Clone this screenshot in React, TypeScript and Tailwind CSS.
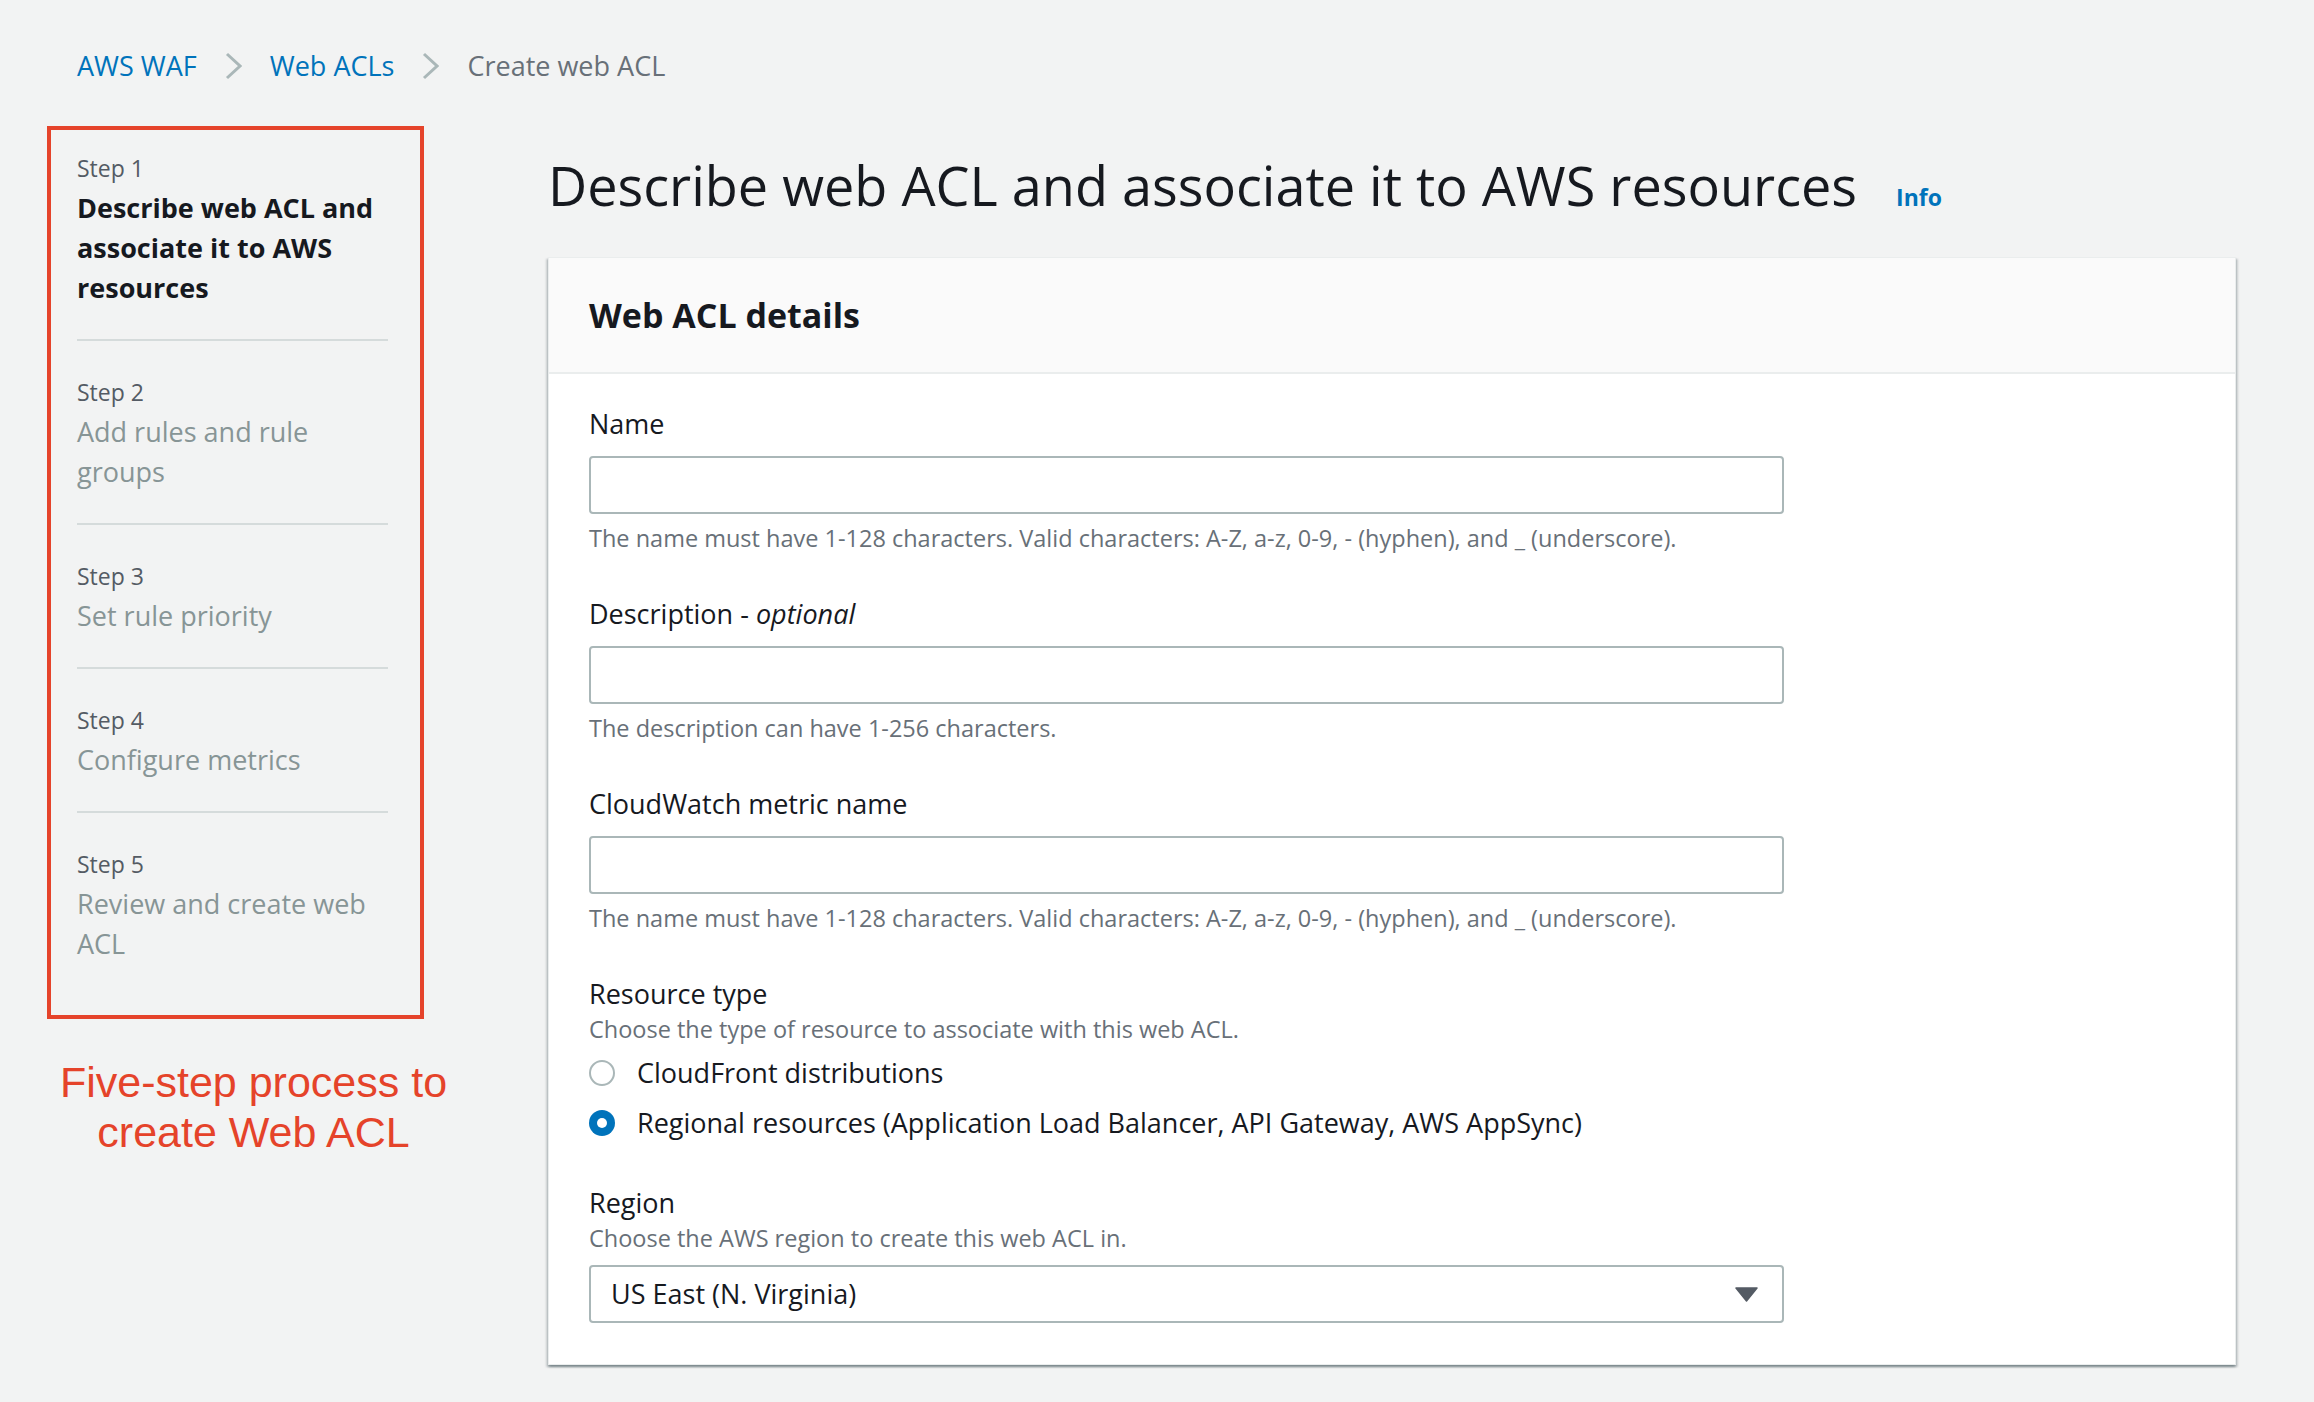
const steps = [
  { label: "Step 1", lines: ["Describe web ACL and", "associate it to AWS", "resources"], active: true },
  { label: "Step 2", lines: ["Add rules and rule", "groups"], active: false },
  { label: "Step 3", lines: ["Set rule priority"], active: false },
  { label: "Step 4", lines: ["Configure metrics"], active: false },
  { label: "Step 5", lines: ["Review and create web", "ACL"], active: false },
];

const Crumb = () => (
  <svg width="17" height="28" viewBox="0 0 17 28" fill="none" className="shrink-0">
    <path d="M2 2 L15 14 L2 26" stroke="#aab7b8" strokeWidth="3" />
  </svg>
);

const Field = ({ label, hint, first }: { label: React.ReactNode; hint: string; first?: boolean }) => (
  <div className={first ? "" : "mt-[39px]"}>
    <div className="text-[27px] leading-[40px] text-[#16191f] mb-[12px]">{label}</div>
    <div className="h-[58px] w-[1195px] border-2 border-[#aab7b8] rounded-[4px] bg-white" />
    <div className="mt-[7px] text-[23.5px] leading-[34px] text-[#687078]">{hint}</div>
  </div>
);

export default function App() {
  return (
    <div className="min-h-[1402px] w-full bg-[#f2f3f3] font-['Open_Sans',sans-serif] text-[#16191f]">
      {/* breadcrumb */}
      <div className="flex items-center gap-[28px] pt-[46px] pl-[77px] text-[27px] leading-[40px]">
        <span className="text-[#0073bb]">AWS WAF</span>
        <Crumb />
        <span className="text-[#0073bb]">Web ACLs</span>
        <Crumb />
        <span className="text-[#687078]">Create web ACL</span>
      </div>

      <div className="flex mt-[40px] pl-[47px] pr-[78px] gap-[124px]">
        {/* steps */}
        <div className="w-[377px] shrink-0">
          <div className="border-4 border-[#e5432a] pt-[21px] pb-[20px] pl-[26px] pr-[32px]">
            {steps.map((s, i) => (
              <div
                key={s.label}
                className={`pb-[31px] ${i === 0 ? "" : "pt-[34px] border-t-2 border-[#d5dbdb]"}`}
              >
                <div className="text-[23px] leading-[34px] text-[#545b64] mb-[3px]">{s.label}</div>
                <div
                  className={`text-[27px] leading-[40px] whitespace-nowrap ${
                    s.active ? "font-bold text-[#16191f]" : "text-[#879596]"
                  }`}
                >
                  {s.lines.map((l) => (
                    <div key={l}>{l}</div>
                  ))}
                </div>
              </div>
            ))}
          </div>
          <div className="mt-[38px] pl-[36px] flex flex-col items-center text-[43px] leading-[50px] whitespace-nowrap text-[#e5432a] font-['Liberation_Sans',Arial,sans-serif]">
            <div>Five-step process to</div>
            <div>create Web ACL</div>
          </div>
        </div>

        {/* main */}
        <div className="flex-1">
          <div className="mt-[25px] flex items-baseline gap-[39px]">
            <h1 className="text-[54px] leading-[68px] font-normal text-[#16191f]">
              Describe web ACL and associate it to AWS resources
            </h1>
            <span className="text-[23px] font-bold text-[#0073bb]">Info</span>
          </div>

          <div className="mt-[38px] bg-white border border-[#eaeded] shadow-[0_2px_2px_0_rgba(0,28,36,0.3),2px_2px_2px_0_rgba(0,28,36,0.15),-2px_2px_2px_0_rgba(0,28,36,0.15)]">
            <div className="bg-[#fafafa] border-b-2 border-[#eaeded] py-[33px] pl-[40px]">
              <h2 className="text-[34px] leading-[48px] font-bold text-[#16191f]">Web ACL details</h2>
            </div>

            <div className="pt-[30px] pb-[41px] pl-[40px]">
              <Field
                first
                label="Name"
                hint="The name must have 1-128 characters. Valid characters: A-Z, a-z, 0-9, - (hyphen), and _ (underscore)."
              />
              <Field
                label={
                  <>
                    Description - <i>optional</i>
                  </>
                }
                hint="The description can have 1-256 characters."
              />
              <Field
                label="CloudWatch metric name"
                hint="The name must have 1-128 characters. Valid characters: A-Z, a-z, 0-9, - (hyphen), and _ (underscore)."
              />

              <div className="mt-[39px]">
                <div className="text-[27px] leading-[40px]">Resource type</div>
                <div className="text-[23.5px] leading-[30px] text-[#687078]">
                  Choose the type of resource to associate with this web ACL.
                </div>
                <div className="mt-[9px] flex flex-col gap-[10px]">
                  <label className="flex items-center gap-[22px] text-[27px] leading-[40px]">
                    <span className="w-[26px] h-[26px] rounded-full border-2 border-[#aab7b8] bg-white shrink-0" />
                    CloudFront distributions
                  </label>
                  <label className="flex items-center gap-[22px] text-[27px] leading-[40px]">
                    <span className="w-[26px] h-[26px] rounded-full bg-[#0073bb] shrink-0 flex items-center justify-center">
                      <span className="w-[10px] h-[10px] rounded-full bg-white" />
                    </span>
                    Regional resources (Application Load Balancer, API Gateway, AWS AppSync)
                  </label>
                </div>
              </div>

              <div className="mt-[40px]">
                <div className="text-[27px] leading-[40px]">Region</div>
                <div className="text-[23.5px] leading-[30px] text-[#687078]">
                  Choose the AWS region to create this web ACL in.
                </div>
                <div className="mt-[12px] h-[58px] w-[1195px] border-2 border-[#aab7b8] rounded-[4px] bg-white flex items-center justify-between pl-[20px] pr-[24px]">
                  <span className="text-[27px] leading-[40px]">US East (N. Virginia)</span>
                  <svg width="23" height="15" viewBox="0 0 23 15">
                    <path d="M1 1 H22 L11.5 14 Z" fill="#545b64" stroke="#545b64" strokeWidth="1.5" strokeLinejoin="round" />
                  </svg>
                </div>
              </div>
            </div>
          </div>
        </div>
      </div>
    </div>
  );
}
